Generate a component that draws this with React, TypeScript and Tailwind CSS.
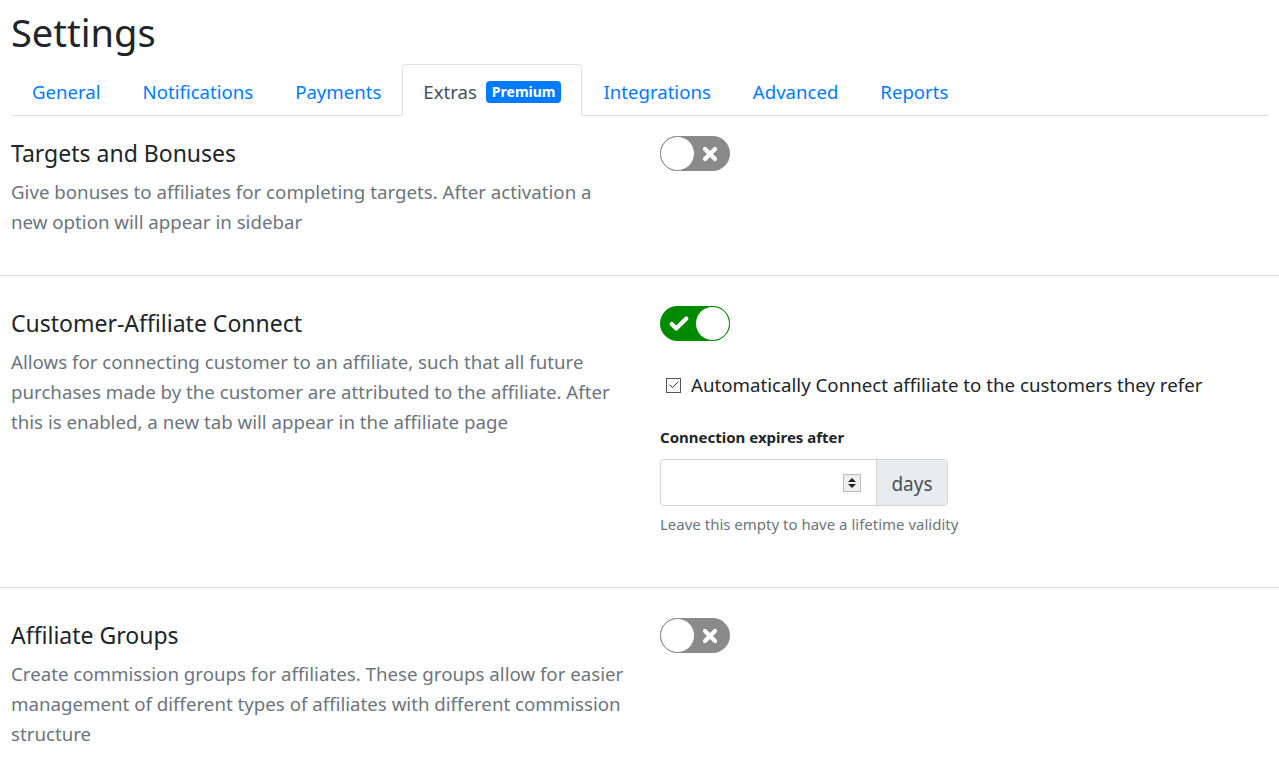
import { Check, X } from "lucide-react";

const tabs = ["General", "Notifications", "Payments", "Extras", "Integrations", "Advanced", "Reports"];

function Toggle({ on }: { on: boolean }) {
  if (on) {
    return (
      <div className="flex h-[35px] w-[70px] items-center justify-between rounded-full bg-[#008a00] pl-[8px]">
        <Check size={22} strokeWidth={4.5} className="text-white" />
        <div className="h-[35px] w-[35px] rounded-full border border-[#008a00] bg-white" />
      </div>
    );
  }
  return (
    <div className="flex h-[35px] w-[70px] items-center justify-between rounded-full bg-[#8a8a8a] pr-[10px]">
      <div className="h-[35px] w-[35px] rounded-full border border-[#8a8a8a] bg-white" />
      <X size={20} strokeWidth={5} className="text-white" />
    </div>
  );
}

function Section({
  title,
  desc,
  on,
  children,
  className,
}: {
  title: string;
  desc: string;
  on: boolean;
  children?: React.ReactNode;
  className?: string;
}) {
  return (
    <div className={"grid grid-cols-[649px_1fr] " + (className ?? "")}>
      <div className="pl-[11px] pr-[20px]">
        <h2 className="text-[23px] leading-[34px] text-[#212529]">{title}</h2>
        <p className="mt-[7px] text-[18.7px] leading-[30px] text-[#6c757d]">{desc}</p>
      </div>
      <div className="pl-[11px]">
        <Toggle on={on} />
        {children}
      </div>
    </div>
  );
}

export default function App() {
  return (
    <div className="min-h-screen bg-white font-['Noto_Sans',sans-serif] text-[#212529]">
      <div className="px-[11px] pt-[8px]">
        <h1 className="text-[38px] leading-[48px] text-[#212529]">Settings</h1>
        <div className="mt-[8px] flex border-b border-[#dee2e6]">
          {tabs.map((t) =>
            t === "Extras" ? (
              <div
                key={t}
                className="-mb-px flex h-[52px] items-center gap-[9px] rounded-t-[4px] border border-b-white border-[#dee2e6] px-[20px] pt-[4px] text-[18.6px] text-[#495057]"
              >
                <span>{t}</span>
                <span className="rounded-[4px] bg-[#007bff] px-[6px] text-[14px] leading-[22px] font-bold text-white">
                  Premium
                </span>
              </div>
            ) : (
              <div key={t} className="flex h-[51px] items-center px-[21px] pt-[5px] text-[18.6px] text-[#007bff]">
                {t}
              </div>
            )
          )}
        </div>
      </div>

      <Section
        className="pt-[20px] pb-[38px]"
        title="Targets and Bonuses"
        desc="Give bonuses to affiliates for completing targets. After activation a new option will appear in sidebar"
        on={false}
      />
      <div className="border-t border-[#dee2e6]" />

      <Section
        className="pt-[30px] pb-[52px]"
        title="Customer-Affiliate Connect"
        desc="Allows for connecting customer to an affiliate, such that all future purchases made by the customer are attributed to the affiliate. After this is enabled, a new tab will appear in the affiliate page"
        on={true}
      >
        <label className="mt-[30px] flex items-center gap-[10px] pl-[6px] text-[18.7px] text-[#212529]">
          <span className="flex h-[15px] w-[15px] items-center justify-center border border-[#555] bg-white">
            <Check size={12} strokeWidth={2} className="text-[#333]" />
          </span>
          Automatically Connect affiliate to the customers they refer
        </label>
        <div className="mt-[27px] text-[15px] font-bold leading-[22px] text-[#212529]">Connection expires after</div>
        <div className="mt-[11px] flex h-[47px] w-[288px] rounded-[4px] border border-[#ced4da]">
          <div className="flex flex-1 items-center justify-end pr-[15px]">
            <div className="flex h-[18px] w-[18px] flex-col items-center justify-center gap-[2px] border border-[#bbb] bg-[#eee]">
              <svg width="8" height="4" viewBox="0 0 8 4">
                <path d="M0 4 L4 0 L8 4 Z" fill="#222" />
              </svg>
              <svg width="8" height="4" viewBox="0 0 8 4">
                <path d="M0 0 L8 0 L4 4 Z" fill="#222" />
              </svg>
            </div>
          </div>
          <div className="flex w-[71px] items-center justify-center rounded-r-[4px] border-l border-[#ced4da] bg-[#e9ecef] pt-[4px] text-[19px] text-[#495057]">
            days
          </div>
        </div>
        <div className="mt-[7px] text-[15px] leading-[22px] text-[#6c757d]">Leave this empty to have a lifetime validity</div>
      </Section>
      <div className="border-t border-[#dee2e6]" />

      <Section
        className="pt-[30px] pb-[20px]"
        title="Affiliate Groups"
        desc="Create commission groups for affiliates. These groups allow for easier management of different types of affiliates with different commission structure"
        on={false}
      />
    </div>
  );
}
